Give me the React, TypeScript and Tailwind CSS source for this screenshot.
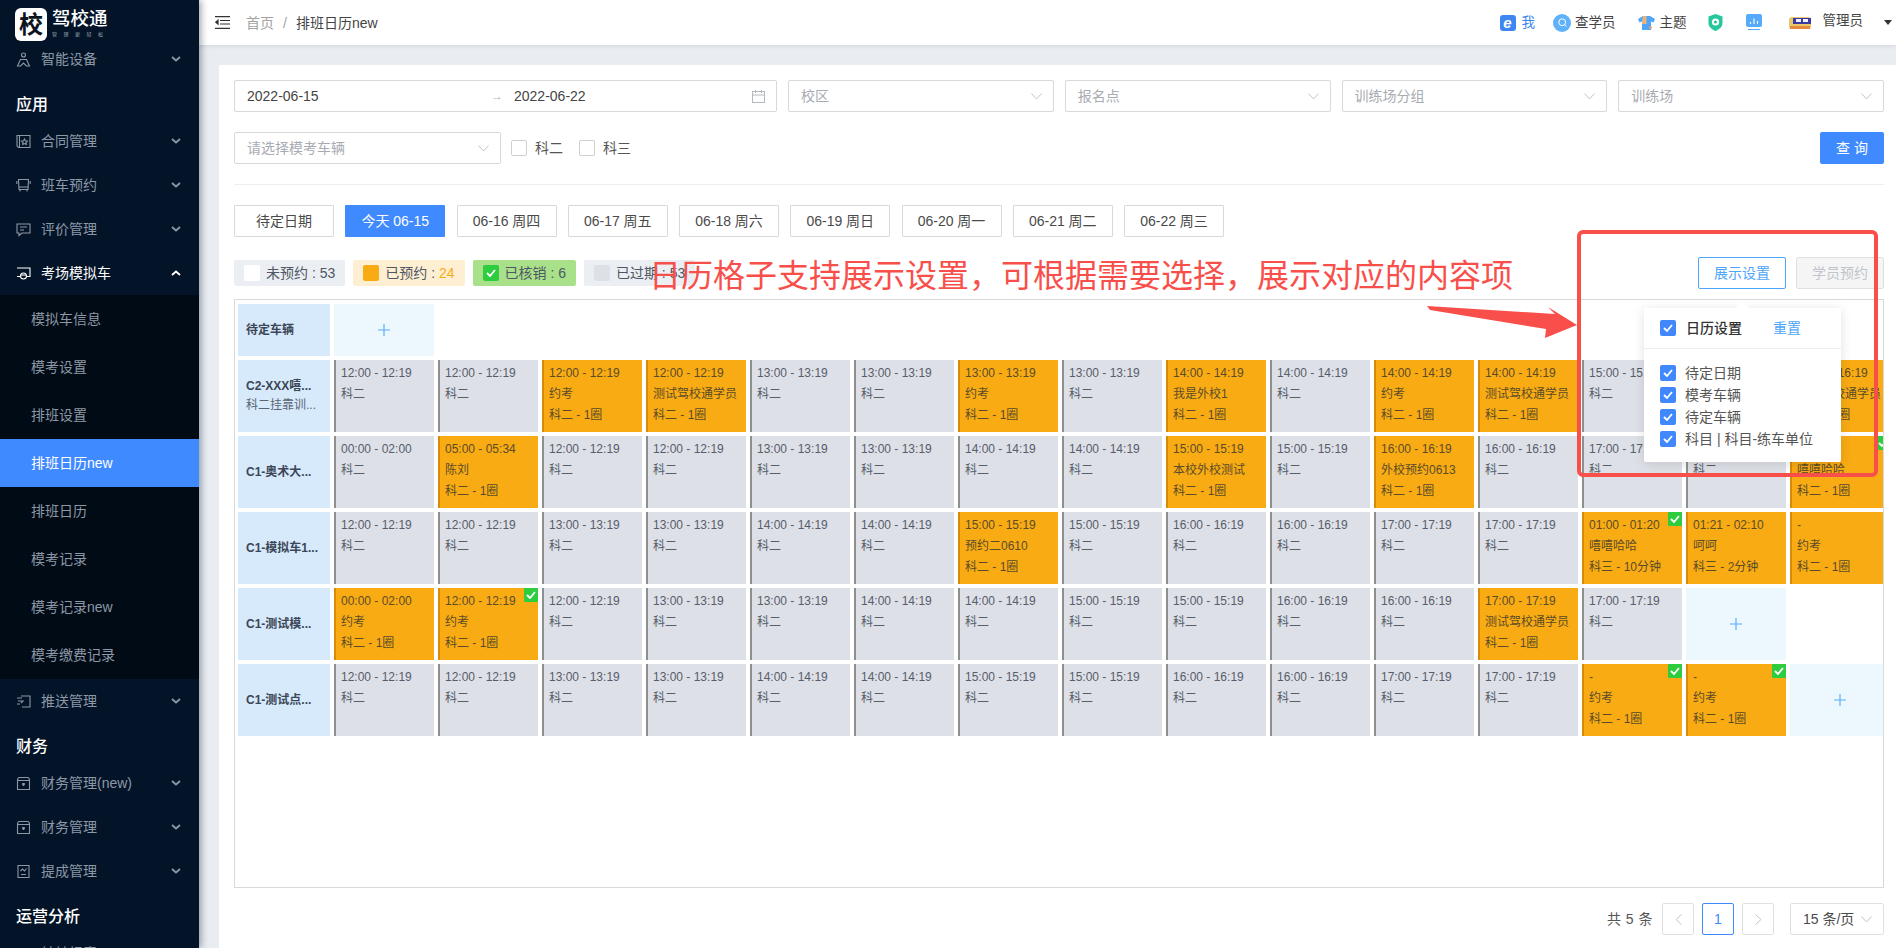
import React from 'react';

type Cell = { time?: string; name?: string; sub?: string; done?: boolean; add?: boolean; empty?: boolean };

const g = (h: string): Cell => ({ time: `${h}:00 - ${h}:19`, sub: '科二' });
const o = (h: string, name: string, done = false): Cell => ({ time: `${h}:00 - ${h}:19`, name, sub: '科二 - 1圈', done });
const x = (time: string, name: string, sub: string, done = false): Cell => ({ time, name, sub, done });
const add: Cell = { add: true };

const rows: { title: string; desc?: string; h: string; cells: Cell[] }[] = [
  { title: '待定车辆', h: 'h-[52px]', cells: [add] },
  {
    title: 'C2-XXX嘻...',
    desc: '科二挂靠训...',
    h: 'h-[72px]',
    cells: [
      g('12'), g('12'), o('12', '约考'), o('12', '测试驾校通学员'), g('13'), g('13'), o('13', '约考'), g('13'),
      o('14', '我是外校1'), g('14'), o('14', '约考'), o('14', '测试驾校通学员'), g('15'), g('15'), o('16', '测试驾校通学员'),
    ],
  },
  {
    title: 'C1-奥术大...',
    h: 'h-[72px]',
    cells: [
      { time: '00:00 - 02:00', sub: '科二' }, x('05:00 - 05:34', '陈刘', '科二 - 1圈'), g('12'), g('12'), g('13'), g('13'), g('14'), g('14'),
      o('15', '本校外校测试'), g('15'), o('16', '外校预约0613'), g('16'), g('17'), g('17'), x('-', '嘻嘻哈哈', '科二 - 1圈', true),
    ],
  },
  {
    title: 'C1-模拟车1...',
    h: 'h-[72px]',
    cells: [
      g('12'), g('12'), g('13'), g('13'), g('14'), g('14'), o('15', '预约二0610'), g('15'), g('16'), g('16'), g('17'), g('17'),
      x('01:00 - 01:20', '嘻嘻哈哈', '科三 - 10分钟', true), x('01:21 - 02:10', '呵呵', '科三 - 2分钟'), x('-', '约考', '科二 - 1圈'),
    ],
  },
  {
    title: 'C1-测试模...',
    h: 'h-[72px]',
    cells: [
      x('00:00 - 02:00', '约考', '科二 - 1圈'), o('12', '约考', true), g('12'), g('13'), g('13'), g('14'), g('14'), g('15'), g('15'), g('16'), g('16'),
      o('17', '测试驾校通学员'), g('17'), add, { empty: true },
    ],
  },
  {
    title: 'C1-测试点...',
    h: 'h-[72px]',
    cells: [
      g('12'), g('12'), g('13'), g('13'), g('14'), g('14'), g('15'), g('15'), g('16'), g('16'), g('17'), g('17'),
      x('-', '约考', '科二 - 1圈', true), x('-', '约考', '科二 - 1圈', true), add,
    ],
  },
];

const tabs = ['待定日期', '今天 06-15', '06-16 周四', '06-17 周五', '06-18 周六', '06-19 周日', '06-20 周一', '06-21 周二', '06-22 周三'];

const Ic = ({ children }: { children: React.ReactNode }) => (
  <svg width="15" height="15" viewBox="0 0 15 15" fill="none" stroke="currentColor" strokeWidth="1.1" className="shrink-0">
    {children}
  </svg>
);

const icons: Record<string, React.ReactNode> = {
  device: (<Ic><circle cx="7.5" cy="3" r="2" /><path d="M4.5 7.5h6l3 6.5h-3l-3-3-3 3h-3z" /></Ic>),
  contract: (<Ic><path d="M1 1.5h13v12H2.5L1 12zM3.5 1.5v12" /><path d="M8.5 5l.9 1.8 2 .3-1.4 1.4.3 2-1.8-.9-1.8.9.3-2L5.6 7.1l2-.3z" /></Ic>),
  bus: (<Ic><path d="M2.5 1.5h10l-.5 10h-9zM2.5 9h10M4 11.5v2M11 11.5v2M0.8 3v3M14.2 3v3" /></Ic>),
  review: (<Ic><path d="M1 2h13v9H6l-3 2.5V11H1z" /><path d="M4 5h7M4 8h4" /></Ic>),
  car: (<Ic><path d="M1 2h13v8.5h-3M4 10.5H1z" /><circle cx="7.5" cy="10" r="3" /><path d="M5 9h5" /></Ic>),
  push: (<Ic><path d="M5 2h9v11H6M1 4h5M2 7h5l-2 2M1 10h3" /></Ic>),
  money: (<Ic><path d="M1.5 4.5c0-2 1-3 2-3h8c1 0 2 1 2 3v9h-12zM1.5 4.5h12" /><path d="M6 8h3M7.5 7v3" strokeWidth="1.6" /></Ic>),
  bonus: (<Ic><path d="M2 1.5h11v12H2z" /><path d="M4.5 7l2-2 2 2 2-2.5M5 10.5h5" /></Ic>),
  report: (<Ic><path d="M3 13l3-9 3 4 3-6" /></Ic>),
};

const Chevron = ({ up }: { up?: boolean }) => (
  <svg width="10" height="6" viewBox="0 0 10 6" fill="none" stroke="currentColor" strokeWidth="1.8" className="shrink-0">
    <path d={up ? 'M1 5l4-3.5L9 5' : 'M1 1l4 3.5L9 1'} />
  </svg>
);

const NavItem = ({ icon, label, up, bright }: { icon: string; label: string; up?: boolean; bright?: boolean }) => (
  <div className={`h-[44px] shrink-0 flex items-center pl-4 pr-[18px] text-sm ${bright ? 'text-white' : 'text-[#8d98a6]'}`}>
    {icons[icon]}
    <span className="ml-[10px] flex-1 whitespace-nowrap">{label}</span>
    <Chevron up={up} />
  </div>
);

const NavHead = ({ label }: { label: string }) => (
  <div className="h-[38px] shrink-0 flex items-center pt-[10px] pl-4 text-base font-medium text-white">{label}</div>
);

const Caret = () => (
  <svg width="11" height="7" viewBox="0 0 11 7" fill="none" stroke="#c0c4cc" strokeWidth="1" className="shrink-0">
    <path d="M.5 .5l5 5.5 5-5.5" />
  </svg>
);

const Select = ({ text, className }: { text: string; className: string }) => (
  <div className={`h-8 flex items-center justify-between border border-[#d9d9d9] rounded-[2px] pl-3 pr-[11px] text-sm text-[#a8abb2] ${className}`}>
    <span>{text}</span>
    <Caret />
  </div>
);

const Tick = () => (
  <svg width="10" height="8" viewBox="0 0 10 8" fill="none" stroke="#fff" strokeWidth="1.8">
    <path d="M1 4l3 3 5-6" />
  </svg>
);

const Checked = () => (
  <span className="w-4 h-4 shrink-0 rounded-[2px] bg-[#4088fb] flex items-center justify-center">
    <Tick />
  </span>
);

const DoneBadge = ({ className }: { className: string }) => (
  <span className={`w-[14px] h-[14px] bg-[#2ecc3f] rounded-[1px] flex items-center justify-center ${className}`}>
    <Tick />
  </span>
);

const Legend = ({ bg, box, label, count }: { bg: string; box: React.ReactNode; label: string; count: React.ReactNode }) => (
  <div className={`h-[26px] flex items-center gap-[6px] px-[10px] rounded-[2px] text-sm text-[#4f5664] whitespace-nowrap ${bg}`}>
    {box}
    <span>{label} : {count}</span>
  </div>
);

const CellBox = ({ c }: { c: Cell }) => {
  if (c.empty) return <div />;
  if (c.add)
    return (
      <div className="bg-[#ecf7fe] flex items-center justify-center">
        <svg width="12" height="12" viewBox="0 0 12 12" stroke="#5aaefc" strokeWidth="1.2"><path d="M0 6h12M6 0v12" /></svg>
      </div>
    );
  const on = !!c.name;
  return (
    <div
      className={`relative border-l-2 pl-[5px] pt-[3px] text-xs leading-[21px] whitespace-nowrap overflow-hidden ${
        on ? 'bg-[#f9ab14] border-[#d88a08] text-[#5b4c28]' : 'bg-[#dee0e7] border-[#8f8f8f] text-[#565d6b]'
      }`}
    >
      {c.done && <DoneBadge className="absolute top-0 right-0" />}
      <div>{c.time}</div>
      {c.name && <div>{c.name}</div>}
      <div>{c.sub}</div>
    </div>
  );
};

const Shirt = () => (
  <svg width="17" height="16" viewBox="0 0 17 16">
    <path d="M5 1L0 4l1.5 3.5L4 6.5V15h9V6.5l2.5 1L17 4l-5-3z" fill="#4ea6fb" />
    <path d="M5 1h3.5v8H4V6.5z" fill="#e7b377" />
    <circle cx="12.5" cy="12.5" r="1.5" fill="#ea9d6e" />
  </svg>
);

export default function App() {
  return (
    <div className="relative h-[948px] w-full flex overflow-hidden font-['Liberation_Sans','Noto_Sans_CJK_SC',sans-serif]">
      <aside className="relative z-10 w-[199px] shrink-0 bg-[#031429] flex flex-col overflow-hidden shadow-[2px_0_7px_rgba(0,21,41,0.4)]">
        <div className="h-[37px] shrink-0 flex items-start pl-[15px] pt-2 relative z-10">
          <div className="w-8 h-[33px] bg-white rounded-[6px] flex items-center justify-center text-[24px] leading-none font-bold text-[#0c1420]">校</div>
          <div className="ml-[5px] -mt-[1px] text-white">
            <div className="text-[18.5px] leading-[24px] font-medium whitespace-nowrap">驾校通</div>
            <div className="text-[5px] leading-[7px] tracking-[6.5px] text-[#9aa5b1] whitespace-nowrap">管理更轻松</div>
          </div>
        </div>
        <NavItem icon="device" label="智能设备" />
        <NavHead label="应用" />
        <NavItem icon="contract" label="合同管理" />
        <NavItem icon="bus" label="班车预约" />
        <NavItem icon="review" label="评价管理" />
        <NavItem icon="car" label="考场模拟车" up bright />
        <div className="bg-[#010b16] shrink-0">
          {['模拟车信息', '模考设置', '排班设置', '排班日历new', '排班日历', '模考记录', '模考记录new', '模考缴费记录'].map((s, i) => (
            <div key={s} className={`h-12 flex items-center pl-[31px] text-sm ${i === 3 ? 'bg-[#408aff] text-white' : 'text-[#8d98a6]'}`}>{s}</div>
          ))}
        </div>
        <NavItem icon="push" label="推送管理" />
        <NavHead label="财务" />
        <NavItem icon="money" label="财务管理(new)" />
        <NavItem icon="money" label="财务管理" />
        <NavItem icon="bonus" label="提成管理" />
        <NavHead label="运营分析" />
        <NavItem icon="report" label="转转报表" />
      </aside>

      <main className="flex-1 min-w-0 flex flex-col bg-[#e9edf2]">
        <header className="h-[45px] shrink-0 bg-white flex items-center pl-4 text-sm shadow-[0_1px_4px_rgba(0,21,41,0.1)]">
          <svg width="15" height="13" viewBox="0 0 15 13" stroke="#333" strokeWidth="1.2" fill="none" className="shrink-0">
            <path d="M0 .6h15M5 4.5h10M5 8h10M0 12.4h15" />
            <path d="M3 4.2L.8 6.2 3 8.2z" fill="#333" />
          </svg>
          <span className="ml-4 text-[#a3a3a3]">首页</span>
          <span className="mx-[9px] text-[#a3a3a3]">/</span>
          <span className="text-[#444]">排班日历new</span>
          <div className="ml-auto flex items-center pr-1 text-[13.5px] text-[#444]">
            <span className="w-4 h-4 rounded-[3px] bg-[#3f87f0] text-white italic font-bold text-[15px] leading-4 text-center">e</span>
            <span className="ml-[6px] text-[#3f87f0]">我</span>
            <span className="ml-[18px] w-[18px] h-[18px] rounded-full bg-[#5fb2fa] flex items-center justify-center">
              <svg width="9" height="9" viewBox="0 0 9 9" fill="none" stroke="#fff" strokeWidth="1"><circle cx="4.2" cy="4.2" r="3.4" /><path d="M6.6 6.6L8.4 8.4" /></svg>
            </span>
            <span className="ml-1">查学员</span>
            <span className="ml-[22px] flex"><Shirt /></span>
            <span className="ml-[5px]">主题</span>
            <svg width="15" height="17" viewBox="0 0 15 17" className="ml-[21px]">
              <path d="M7.5 0l7 2.5V9c0 4-3.5 6.5-7 8-3.5-1.5-7-4-7-8V2.5z" fill="#26c79c" />
              <circle cx="7.5" cy="8" r="3.6" fill="#fff" />
              <circle cx="7.5" cy="8" r="1.6" fill="#26c79c" />
            </svg>
            <svg width="16" height="17" viewBox="0 0 16 17" className="ml-[23px]">
              <rect width="16" height="13" rx="2" fill="#56aafc" />
              <path d="M4.5 10V8M8 10V4.5M11.5 10V7" stroke="#fff" strokeWidth="1.1" />
              <rect x="2" y="15" width="12" height="1" fill="#56aafc" />
            </svg>
            <svg width="24" height="14" viewBox="0 0 24 14" className="ml-[26px]">
              <rect x="1" y="1" width="22" height="12" rx="3" fill="#e9c66a" />
              <rect x="5" y="2" width="18" height="6" fill="#3a3aa0" />
              <rect x="8" y="3" width="5" height="3" fill="#f2f2ff" />
              <rect x="15" y="3" width="5" height="3" fill="#f2f2ff" />
              <rect x="2" y="10" width="20" height="3" fill="#e58a3a" />
            </svg>
            <span className="ml-[11px] mb-[3px]">管理员</span>
            <svg width="8" height="5" viewBox="0 0 8 5" className="ml-[21px] shrink-0"><path d="M0 0h8L4 5z" fill="#333" /></svg>
          </div>
        </header>

        <div className="flex-1 min-h-0 pt-5 pl-5">
          <div className="h-full bg-white pl-[15px] pr-3 pt-[15px]">
            <div className="flex gap-[11px]">
              <div className="w-[543px] h-8 shrink-0 flex items-center border border-[#d9d9d9] rounded-[2px] pl-3 pr-[11px] text-sm text-[#444]">
                <span className="w-[244px]">2022-06-15</span>
                <span className="w-[23px] text-[#b4b8bf] text-xs">→</span>
                <span>2022-06-22</span>
                <svg width="13" height="13" viewBox="0 0 13 13" fill="none" stroke="#b4b8bf" strokeWidth="1" className="ml-auto">
                  <rect x=".5" y="1.5" width="12" height="11" /><path d="M.5 5h12M3.5 0v3M9.5 0v3" />
                </svg>
              </div>
              {['校区', '报名点', '训练场分组', '训练场'].map((t) => (
                <Select key={t} text={t} className="flex-1" />
              ))}
            </div>

            <div className="mt-5 flex items-center text-sm text-[#555]">
              <Select text="请选择模考车辆" className="w-[267px]" />
              <span className="ml-[10px] w-4 h-4 border border-[#d0d0d0] rounded-[2px]" />
              <span className="ml-[8px]">科二</span>
              <span className="ml-[16px] w-4 h-4 border border-[#d0d0d0] rounded-[2px]" />
              <span className="ml-[8px]">科三</span>
              <button className="ml-auto w-16 h-8 bg-[#408aff] rounded-[2px] text-white text-sm">查 询</button>
            </div>

            <div className="mt-5 border-t border-[#eceef1]" />

            <div className="mt-5 flex gap-[11.25px]">
              {tabs.map((t, i) => (
                <div
                  key={t}
                  className={`w-[100px] h-8 flex items-center justify-center text-sm rounded-[1px] ${
                    i === 1 ? 'bg-[#408aff] text-white' : 'border border-[#d9d9d9] text-[#4a4a4a]'
                  }`}
                >
                  {t}
                </div>
              ))}
            </div>

            <div className="mt-5 h-8 flex items-center">
              <div className="flex gap-2">
                <Legend bg="bg-[#ebeff3]" box={<span className="w-4 h-4 bg-white rounded-[2px]" />} label="未预约" count="53" />
                <Legend bg="bg-[#feefd2]" box={<span className="w-4 h-4 bg-[#f9ab14] rounded-[2px]" />} label="已预约" count={<span className="text-[#f9ab14]">24</span>} />
                <Legend bg="bg-[#a8e18a]" box={<span className="w-4 h-4 bg-[#2ecc3f] rounded-[2px] flex items-center justify-center"><Tick /></span>} label="已核销" count="6" />
                <Legend bg="bg-[#ebeff3]" box={<span className="w-4 h-4 bg-[#dee0e7] rounded-[2px]" />} label="已过期" count="53" />
              </div>
              <button className="ml-auto w-[88px] h-8 border border-[#4ea6fb] rounded-[2px] text-sm text-[#4ea6fb]">展示设置</button>
              <button className="ml-[10px] w-[88px] h-8 border border-[#e0e0e0] bg-[#f5f5f5] rounded-[2px] text-sm text-[#c0c4cc]">学员预约</button>
            </div>

            <div className="mt-[10px] h-[589px] border border-[#d9d9d9] pl-[3px] pr-[3px] pt-1 overflow-hidden">
              <div className="flex flex-col gap-1">
                {rows.map((r) => (
                  <div key={r.title} className={`flex gap-1 ${r.h}`}>
                    <div className="w-[92px] shrink-0 bg-[#d6eafc] pl-2 flex flex-col justify-center text-xs leading-[19px] text-[#3c4656] whitespace-nowrap">
                      <div className="font-bold">{r.title}</div>
                      {r.desc && <div className="text-[#5a6472]">{r.desc}</div>}
                    </div>
                    {r.cells.map((c, i) => (
                      <div key={i} className="w-[100px] shrink-0 grid">
                        <CellBox c={c} />
                      </div>
                    ))}
                  </div>
                ))}
              </div>
            </div>

            <div className="mt-[15px] flex items-center justify-end text-sm text-[#555]">
              <span className="mr-[9px] tracking-[0.5px]">共 5 条</span>
              <span className="w-8 h-8 border border-[#e0e0e0] rounded-[2px] flex items-center justify-center">
                <svg width="7" height="11" viewBox="0 0 7 11" fill="none" stroke="#c0c4cc"><path d="M6.5 .5L1 5.5l5.5 5" /></svg>
              </span>
              <span className="ml-2 w-8 h-8 border border-[#408aff] rounded-[2px] flex items-center justify-center text-[#408aff]">1</span>
              <span className="ml-2 w-8 h-8 border border-[#e0e0e0] rounded-[2px] flex items-center justify-center">
                <svg width="7" height="11" viewBox="0 0 7 11" fill="none" stroke="#c0c4cc"><path d="M.5 .5L6 5.5l-5.5 5" /></svg>
              </span>
              <span className="ml-4 w-[94px] h-8 border border-[#e0e0e0] rounded-[2px] pl-3 pr-[11px] flex items-center justify-between text-[#4a4a4a] whitespace-nowrap">
                15 条/页
                <Caret />
              </span>
            </div>
          </div>
        </div>
      </main>

      {/* popover opened from 展示设置 */}
      <div className="absolute z-20 left-[1644px] top-[308px] w-[197px] h-[154px] bg-white rounded-[2px] shadow-[0_2px_12px_rgba(0,0,0,0.12)] text-sm text-[#555]">
        <span className="absolute -top-[5px] left-[93px] w-[10px] h-[10px] rotate-45 bg-white" />
        <div className="h-[41px] flex items-center pl-4 border-b border-[#ebeef2]">
          <Checked />
          <span className="ml-[10px] font-medium text-[#333]">日历设置</span>
          <span className="ml-[31px] text-[#4ea6fb]">重置</span>
        </div>
        <div className="pt-[13px] pl-4 flex flex-col">
          {['待定日期', '模考车辆', '待定车辆', '科目 | 科目-练车单位'].map((t) => (
            <div key={t} className="h-[22px] flex items-center gap-[9px] whitespace-nowrap">
              <Checked />
              <span>{t}</span>
            </div>
          ))}
        </div>
      </div>

      {/* red annotation drawn on top of the screenshot */}
      <div className="absolute z-30 left-[649px] top-[256px] text-[32px] leading-[40px] text-[#f94f4b] whitespace-nowrap">
        日历格子支持展示设置，可根据需要选择，展示对应的内容项
      </div>
      <div className="absolute z-30 left-[1577px] top-[230px] w-[301px] h-[247px] border-4 border-[#f94f4b] rounded-md" />
      <svg width="160" height="40" viewBox="1425 303 160 40" className="absolute z-30 left-[1425px] top-[303px]">
        <path d="M1427 306L1555 314 1548 307 1577 325 1545 338 1546 329 1430 310z" fill="#f94f4b" />
      </svg>
    </div>
  );
}
